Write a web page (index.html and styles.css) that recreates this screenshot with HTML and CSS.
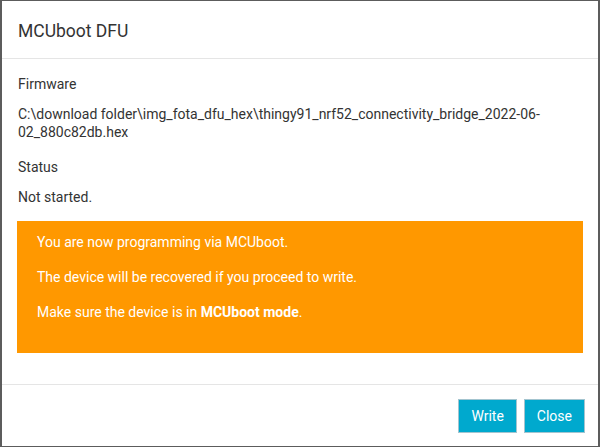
FILE: index.html
```html
<!DOCTYPE html>
<html>
<head>
<meta charset="utf-8">
<link rel="stylesheet" href="styles.css">
</head>
<body>
<div class="dialog">
  <div class="dialog-header">
    <h4 class="title">MCUboot DFU</h4>
  </div>
  <div class="dialog-body">
    <div class="field">
      <div class="label">Firmware</div>
      <div class="value">C:\download folder\img_fota_dfu_hex\thingy91_nrf52_connectivity_bridge_2022-06-02_880c82db.hex</div>
    </div>
    <div class="field field-last">
      <div class="label">Status</div>
      <div class="value">Not started.</div>
    </div>
    <div class="alert">
      <p>You are now programming via MCUboot.</p>
      <p>The device will be recovered if you proceed to write.</p>
      <p>Make sure the device is in <strong>MCUboot mode</strong>.</p>
    </div>
  </div>
  <div class="dialog-footer">
    <button class="btn">Write</button>
    <button class="btn">Close</button>
  </div>
</div>
</body>
</html>
```
FILE: styles.css
```css
html, body {
  margin: 0;
  padding: 0;
  height: 100%;
}
body {
  background: #5c5c5c;
  font-family: Roboto, "Liberation Sans", sans-serif;
  padding: 1px 2px 1px 2px;
  box-sizing: border-box;
}
.dialog {
  background: #fff;
  height: 100%;
  display: flex;
  flex-direction: column;
}
.dialog-header {
  height: 57px;
  border-bottom: 1px solid #e5e5e5;
  display: flex;
  align-items: center;
  padding: 0 16px;
}
.title {
  margin: 0;
  font-size: 17.5px;
  font-weight: 400;
  color: #333;
  position: relative;
  top: 1px;
}
.dialog-body {
  flex: 1;
  padding: 16px 15px 30px 15px;
  color: #333;
  font-size: 14px;
  line-height: 18px;
}
.field {
  margin-bottom: 17px;
  padding-left: 1px;
}
.field-last {
  margin-bottom: 15px;
}
.label {
  margin-bottom: 12px;
}
.alert {
  background: #ff9800;
  color: #fff;
  padding: 12px 20px 30px 20px;
  height: 132px;
  box-sizing: border-box;
}
.alert p {
  margin: 0 0 17px 0;
}
.alert strong {
  font-weight: 700;
}
.dialog-footer {
  border-top: 1px solid #e5e5e5;
  height: 62px;
  display: flex;
  justify-content: flex-end;
  align-items: center;
  gap: 7px;
  padding: 0 13px;
  box-sizing: border-box;
}
.btn {
  background: #00a9ce;
  color: #fff;
  border: 1px solid #a3c4cf;
  font-family: Roboto, "Liberation Sans", sans-serif;
  font-size: 14px;
  height: 34px;
  padding: 0 12px;
  margin-top: 0;
  border-radius: 0;
}
```
